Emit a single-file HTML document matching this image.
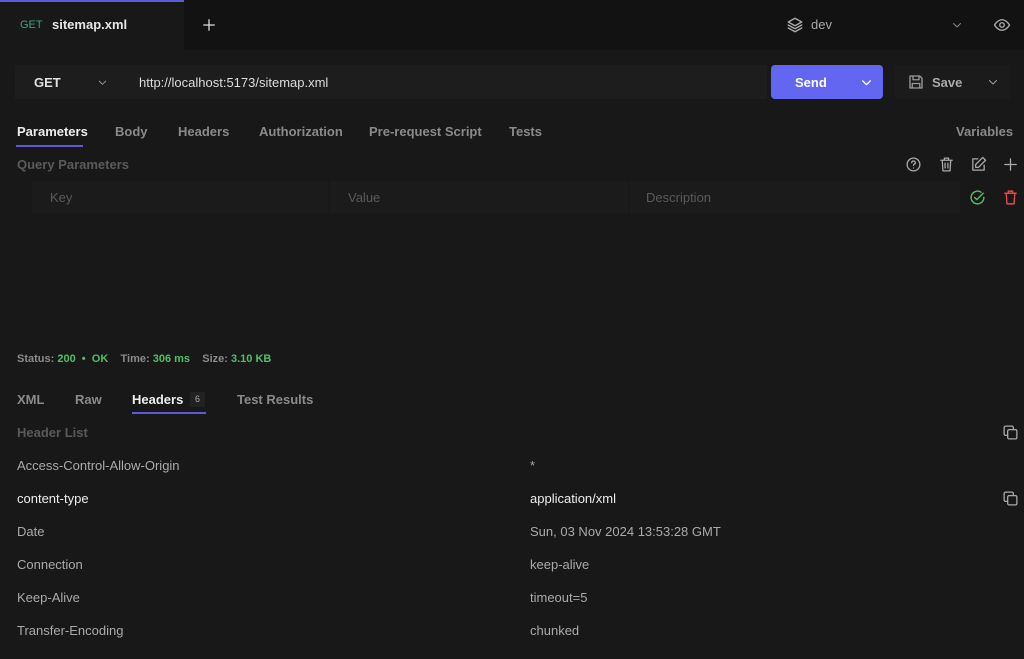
<!DOCTYPE html>
<html><head><style>
*{box-sizing:border-box;margin:0;padding:0}
body{width:1024px;height:659px;background:#181818;font-family:"Liberation Sans",sans-serif;color:#ccc;position:relative;overflow:hidden;font-size:13px}
.a{position:absolute;white-space:nowrap}
.top{position:absolute;left:0;top:0;width:1024px;height:50px;background:#121212}
.tab{position:absolute;left:0;top:0;width:184px;height:50px;background:#181818;border-top:2px solid #5b5bd6}
svg{position:absolute;fill:none;stroke-linecap:round;stroke-linejoin:round}
.g{color:#8a8a8a}
.d{color:#5a5a5a}
.grn{color:#4fbf67}
</style></head><body>
<div class="top"></div><div class="tab"></div>
<div class="a" style="left:20px;top:19px;font-size:11px;color:#3fa37a">GET</div>
<div class="a" style="left:52px;top:17px;color:#e6e6e6;font-weight:bold;font-size:13px">sitemap.xml</div>
<svg style="left:202px;top:18px" width="14" height="14" viewBox="0 0 24 24" stroke="#ddd" stroke-width="2.2"><path d="M12 3v18M3 12h18"/></svg>
<svg style="left:786px;top:16px" width="18" height="18" viewBox="0 0 24 24" stroke="#aaa" stroke-width="1.8"><path d="M12 3 3 8l9 5 9-5-9-5zM3 12l9 5 9-5M3 16l9 5 9-5"/></svg>
<div class="a" style="left:811px;top:17px;color:#aaa">dev</div>
<svg style="left:951px;top:19px" width="12" height="12" viewBox="0 0 24 24" stroke="#888" stroke-width="2"><path d="M5 9l7 7 7-7"/></svg>
<svg style="left:993px;top:16px" width="18" height="18" viewBox="0 0 24 24" stroke="#aaa" stroke-width="1.8"><path d="M2 12s4-7 10-7 10 7 10 7-4 7-10 7S2 12 2 12z"/><circle cx="12" cy="12" r="3"/></svg>

<div class="a" style="left:15px;top:65px;width:752px;height:34px;background:#1d1d1d"></div>
<div class="a" style="left:34px;top:75px;color:#e0e0e0;font-weight:bold">GET</div>
<svg style="left:97px;top:77px" width="11" height="11" viewBox="0 0 24 24" stroke="#999" stroke-width="2"><path d="M5 9l7 7 7-7"/></svg>
<div class="a" style="left:139px;top:75px;color:#ddd">http://localhost:5173/sitemap.xml</div>
<div class="a" style="left:771px;top:65px;width:112px;height:34px;background:#6366f1;border-radius:4px"></div>
<div class="a" style="left:795px;top:75px;color:#fff;font-weight:bold">Send</div>
<svg style="left:860px;top:76px" width="13" height="13" viewBox="0 0 24 24" stroke="#fff" stroke-width="2.5"><path d="M5 9l7 7 7-7"/></svg>
<div class="a" style="left:895px;top:65px;width:115px;height:34px;background:#1b1b1b"></div>
<svg style="left:907px;top:73px" width="18" height="18" viewBox="0 0 24 24" stroke="#999" stroke-width="1.8"><path d="M4 4h13l3 3v13H4zM8 4v5h8V4M7 20v-6h10v6"/></svg>
<div class="a" style="left:932px;top:75px;color:#aaa;font-weight:bold">Save</div>
<svg style="left:987px;top:76px" width="12" height="12" viewBox="0 0 24 24" stroke="#999" stroke-width="2.2"><path d="M5 9l7 7 7-7"/></svg>

<div class="a" style="left:17px;top:124px;color:#eee;font-weight:bold">Parameters</div>
<div class="a" style="left:16px;top:145px;width:67px;height:2px;background:#5b5bd6"></div>
<div class="a g" style="left:115px;top:124px;font-weight:bold">Body</div>
<div class="a g" style="left:178px;top:124px;font-weight:bold">Headers</div>
<div class="a g" style="left:259px;top:124px;font-weight:bold">Authorization</div>
<div class="a g" style="left:369px;top:124px;font-weight:bold">Pre-request Script</div>
<div class="a g" style="left:509px;top:124px;font-weight:bold">Tests</div>
<div class="a g" style="left:956px;top:124px;font-weight:bold">Variables</div>
<div class="a d" style="left:17px;top:157px;font-weight:bold">Query Parameters</div>
<svg style="left:905px;top:156px" width="17" height="17" viewBox="0 0 24 24" stroke="#aaa" stroke-width="1.8"><circle cx="12" cy="12" r="9"/><path d="M9.5 9.5a2.5 2.5 0 1 1 3.5 2.3c-.6.3-1 .8-1 1.5M12 17h.01"/></svg>
<svg style="left:938px;top:156px" width="17" height="17" viewBox="0 0 24 24" stroke="#aaa" stroke-width="1.8"><path d="M4 6h16M9 6V3h6v3M6 6l1 15h10l1-15M10 10v7M14 10v7"/></svg>
<svg style="left:970px;top:156px" width="17" height="17" viewBox="0 0 24 24" stroke="#aaa" stroke-width="1.8"><path d="M11 4H4v16h16v-7M18 2l4 4-10 10H8v-4z"/></svg>
<svg style="left:1002px;top:156px" width="17" height="17" viewBox="0 0 24 24" stroke="#aaa" stroke-width="1.8"><path d="M12 4v16M4 12h16"/></svg>
<div class="a" style="left:32px;top:181px;width:296px;height:32px;background:#1b1b1b"></div>
<div class="a" style="left:330px;top:181px;width:298px;height:32px;background:#1b1b1b"></div>
<div class="a" style="left:630px;top:181px;width:330px;height:32px;background:#1b1b1b"></div>
<div class="a d" style="left:50px;top:190px">Key</div>
<div class="a d" style="left:348px;top:190px">Value</div>
<div class="a d" style="left:646px;top:190px">Description</div>
<svg style="left:969px;top:189px" width="17" height="17" viewBox="0 0 24 24" stroke="#4fbf67" stroke-width="2"><path d="M21 12a9 9 0 1 1-4-7.5M8 12l3 3 9-9"/></svg>
<svg style="left:1002px;top:189px" width="17" height="17" viewBox="0 0 24 24" stroke="#e5484d" stroke-width="2"><path d="M4 6h16M9 6V3h6v3M6 6l1 15h10l1-15"/></svg>

<div class="a" style="left:17px;top:353px;font-size:11px;font-weight:bold"><span class="g">Status: </span><span class="grn">200 &nbsp;•&nbsp; OK</span><span class="g"> &nbsp;&nbsp;&nbsp;Time: </span><span class="grn">306 ms</span><span class="g"> &nbsp;&nbsp;&nbsp;Size: </span><span class="grn">3.10 KB</span></div>
<div class="a g" style="left:17px;top:392px;font-weight:bold">XML</div>
<div class="a g" style="left:75px;top:392px;font-weight:bold">Raw</div>
<div class="a" style="left:132px;top:392px;color:#eee;font-weight:bold">Headers</div>
<div class="a" style="left:190px;top:392px;width:15px;height:15px;background:#222;font-size:9px;color:#aaa;text-align:center;line-height:15px">6</div>
<div class="a" style="left:132px;top:412px;width:74px;height:2px;background:#5b5bd6"></div>
<div class="a g" style="left:237px;top:392px;font-weight:bold">Test Results</div>
<div class="a d" style="left:17px;top:425px;font-weight:bold">Header List</div>
<svg style="left:1002px;top:424px" width="17" height="17" viewBox="0 0 24 24" stroke="#aaa" stroke-width="1.8"><rect x="8" y="8" width="13" height="13" rx="2"/><path d="M16 8V5a2 2 0 0 0-2-2H5a2 2 0 0 0-2 2v9a2 2 0 0 0 2 2h3"/></svg>
<div class="a" style="left:17px;top:458px;color:#aaa">Access-Control-Allow-Origin</div><div class="a" style="left:530px;top:458px;color:#aaa">*</div>
<div class="a" style="left:17px;top:491px;color:#eee">content-type</div><div class="a" style="left:530px;top:491px;color:#eee">application/xml</div>
<svg style="left:1002px;top:490px" width="17" height="17" viewBox="0 0 24 24" stroke="#aaa" stroke-width="1.8"><rect x="8" y="8" width="13" height="13" rx="2"/><path d="M16 8V5a2 2 0 0 0-2-2H5a2 2 0 0 0-2 2v9a2 2 0 0 0 2 2h3"/></svg>
<div class="a" style="left:17px;top:524px;color:#aaa">Date</div><div class="a" style="left:530px;top:524px;color:#aaa">Sun, 03 Nov 2024 13:53:28 GMT</div>
<div class="a" style="left:17px;top:557px;color:#aaa">Connection</div><div class="a" style="left:530px;top:557px;color:#aaa">keep-alive</div>
<div class="a" style="left:17px;top:590px;color:#aaa">Keep-Alive</div><div class="a" style="left:530px;top:590px;color:#aaa">timeout=5</div>
<div class="a" style="left:17px;top:623px;color:#aaa">Transfer-Encoding</div><div class="a" style="left:530px;top:623px;color:#aaa">chunked</div>
</body></html>
